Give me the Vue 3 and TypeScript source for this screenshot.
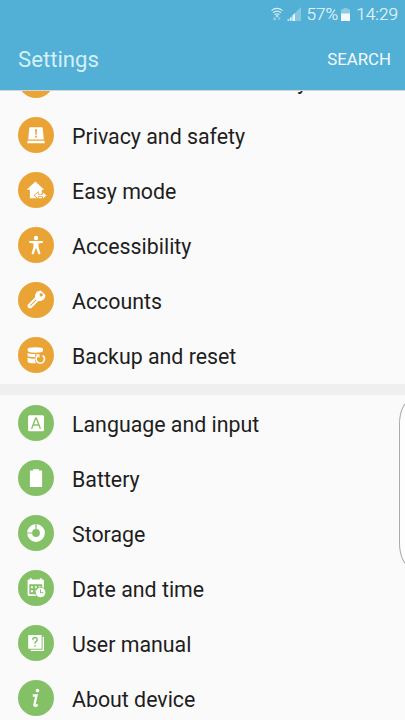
<script setup lang="ts">
type IconName =
  | 'lock' | 'privacy' | 'easy' | 'accessibility' | 'accounts' | 'backup'
  | 'language' | 'battery' | 'storage' | 'date' | 'manual' | 'about'

interface Item {
  icon: IconName
  label: string
}

interface Section {
  tone: 'orange' | 'green'
  items: Item[]
}

const sections: Section[] = [
  {
    tone: 'orange',
    items: [
      { icon: 'lock', label: 'Lock screen and security' },
      { icon: 'privacy', label: 'Privacy and safety' },
      { icon: 'easy', label: 'Easy mode' },
      { icon: 'accessibility', label: 'Accessibility' },
      { icon: 'accounts', label: 'Accounts' },
      { icon: 'backup', label: 'Backup and reset' },
    ],
  },
  {
    tone: 'green',
    items: [
      { icon: 'language', label: 'Language and input' },
      { icon: 'battery', label: 'Battery' },
      { icon: 'storage', label: 'Storage' },
      { icon: 'date', label: 'Date and time' },
      { icon: 'manual', label: 'User manual' },
      { icon: 'about', label: 'About device' },
    ],
  },
]
</script>

<template>
  <div class="screen">
    <header class="header">
      <div class="status">
        <svg class="wifi" viewBox="0 0 14 14" fill="none" stroke="#d9eff7" stroke-width="1.2">
          <path d="M1.500 3.600Q7-.8 12.500 3.600M3 5.700Q7 2.600 11 5.700M4.600 7.700Q7 5.800 9.400 7.700" />
          <path d="M7 7.700l1.500 1.200L7 10.200 5.500 8.900z" fill="#d9eff7" stroke="none" />
          <path d="M3.200 13.300v-2l1.500-1.500 1.500 1.500v2zM7.800 10.200h2.600v1.600l-1.300 1.500-1.300-1.500z" fill="#8bcae1" stroke="none" />
        </svg>
        <svg class="signal" viewBox="0 0 14 14">
          <path d="M0 14L14 0v14z" fill="#86c6df" />
          <path d="M.5 13.500v-1.300H2v1.300zM3 13.500v-3h1.500v3zM5.500 14V8.500L8 6v8z" fill="#e4f4fa" />
        </svg>
        <span class="percent">57%</span>
        <svg class="level" viewBox="0 0 9 13">
          <path d="M2.500 0h4v1.200H9V13H0V1.200h2.500z" fill="#8ccbe2" />
          <path d="M0 5.500h9V13H0z" fill="#f3fafd" />
        </svg>
        <span class="clock">14:29</span>
      </div>
      <div class="bar">
        <h1 class="title">Settings</h1>
        <button class="search" type="button">SEARCH</button>
      </div>
    </header>

    <main class="content">
      <div class="list">
        <section v-for="section in sections" :key="section.tone" class="section" :class="section.tone">
          <div v-for="item in section.items" :key="item.icon" class="row">
            <svg class="icon" viewBox="0 0 36 36">
              <circle class="disc" cx="18" cy="18" r="18" />
              <g v-if="item.icon === 'privacy'" fill="#fff">
                <path d="M12.200 10.200h11.600q.8 0 .9.800l1.100 11.500H10.200L11.300 11q.1-.8.900-.8zM9.400 23.800h17.200v2.400H9.400z" />
                <path class="ink" d="M17.100 12.300h1.900l-.3 5.500h-1.300zM17.200 18.800h1.700v1.600h-1.700z" />
              </g>
              <g v-else-if="item.icon === 'easy'">
                <path d="M17.400 9.500l8.800 8.300h-2.400v8.400H11.900v-8.400H8.600z" fill="#fff" />
                <path class="halo" d="M16.500 23.500l3.600-3v2.200h4.800v-2.200l3.600 3-3.600 3v-2.200h-4.800v2.200z" />
                <path d="M16.500 23.500l3.600-3v2.200h4.800v-2.200l3.600 3-3.600 3v-2.200h-4.800v2.200z" fill="#fff" />
              </g>
              <g v-else-if="item.icon === 'accessibility'" fill="#fff">
                <circle cx="18" cy="11" r="2.200" />
                <path d="M11.100 13.900h13.800v1.800l-4.400.7v3.300l2 7.100-2 .7-2.100-5.900h-.8l-2.100 5.900-2-.7 2-7.100v-3.300l-4.400-.7z" />
              </g>
              <g v-else-if="item.icon === 'accounts'" transform="rotate(45 21.500 14.500)">
                <path d="M19.100 9.300h4.800q1 0 1.500.8l1.100 2.400q.4 1 0 2l-1.100 2.300q-.4.800-1.400 1.200v10.700l-1.700 1.700h-1.600l-1.700-1.700V18q-1-.4-1.400-1.200l-1.100-2.300q-.4-1 0-2l1.100-2.400q.5-.8 1.500-.8z" fill="#fff" />
                <circle class="ink" cx="21.500" cy="12.100" r="1.600" />
                <path class="line" d="M21.500 19.200v8.400" stroke-width="1" />
              </g>
              <g v-else-if="item.icon === 'backup'">
                <path d="M9.600 12.200q0-1.900 8-1.900t7.400 1.900v1.600q0 1.900-7.400 1.900t-8-1.900zM9.600 15.900q2 1 7.700 1.100v3.200q-7.700 0-7.700-1.700zM9.600 20.500q2 1.300 8 1.300v4.500q-8 0-8-1.900z" fill="#fff" />
                <circle class="ink" cx="22.300" cy="22" r="5.400" />
                <path d="M20 18.500a4.200 4.200 0 1 0 4.600 0" fill="none" stroke="#fff" stroke-width="1.600" />
                <path d="M17.700 17.300h3.800v3.800z" fill="#fff" />
              </g>
              <g v-else-if="item.icon === 'language'">
                <rect x="10" y="10.200" width="16" height="16" rx="1.500" fill="#fff" />
                <path class="line" d="M13.600 23.700l4-10.500h.8l4 10.500M15 20h6" stroke-width="1.400" />
              </g>
              <path v-else-if="item.icon === 'battery'" d="M15.100 9.300h5.800v1.200h2.700q.5 0 .5.500v15.500q0 .5-.5.500H12.400q-.5 0-.5-.5V11q0-.5.5-.5h2.700z" fill="#fff" />
              <g v-else-if="item.icon === 'storage'">
                <circle cx="18" cy="18" r="6.400" fill="none" stroke="#fff" stroke-width="5" />
                <path class="line" d="M18 8.800v5.600M8.800 18h5.600" stroke-width="1.200" />
              </g>
              <g v-else-if="item.icon === 'date'">
                <path d="M10.700 9.600h1.100V8.200h2v1.400h8V8.200h2v1.400h1.100q1 0 1 1v14q0 1.400-1.400 1.400H11Q9.600 26 9.600 24.600V10.600q0-1 1.100-1z" fill="#fff" />
                <path class="ink" d="M11.300 14.300h12.900v9.900H12.300q-1 0-1-1z" />
                <path d="M12.900 16.200h2v2h-2zM16.800 16.200h2v2h-2zM20.700 16.200h2v2h-2zM12.900 20.200h2v2h-2zM16.800 20.200h2v2h-2z" fill="#fff" />
                <circle class="ink" cx="22.600" cy="22.500" r="5.500" />
                <circle cx="22.600" cy="22.500" r="4.800" fill="#fff" />
                <path class="line" d="M22.500 19.500v3.300h2.800" stroke-width="1.100" />
              </g>
              <g v-else-if="item.icon === 'manual'">
                <path d="M10.200 10.100h13.400v13.700H10.200zM24.600 11.700H26v14.400H12.700v-1.300h11.900z" fill="#fff" />
                <path class="line" d="M14.700 14.700q.2-2.200 2.300-2.200t2.300 2q0 1.200-1.300 2.100-1 .7-1 2.100M17 19.900v1.500" stroke-width="1.400" />
              </g>
              <g v-else-if="item.icon === 'about'">
                <circle cx="19.500" cy="10.600" r="1.800" fill="#fff" />
                <path d="M14.800 15.500h3.700l-2 8.800q-.4 1.900 1.100 1.600 1-.2 1.900-1.400" fill="none" stroke="#fff" stroke-width="2.300" />
              </g>
            </svg>
            <span class="label">{{ item.label }}</span>
          </div>
        </section>
      </div>
      <div class="edge-handle"></div>
    </main>
  </div>
</template>

<style>
body {
  margin: 0;
  background: #fafafa;
}
</style>

<style scoped>
.screen {
  display: flex;
  flex-direction: column;
  height: 720px;
  overflow: hidden;
  background: #fafafa;
  font-family: Roboto, "Liberation Sans", sans-serif;
}

.header {
  flex: none;
  box-sizing: border-box;
  height: 91px;
  border-bottom: 1px solid #d3d6df;
  background: #52afd5;
}

.status {
  display: flex;
  align-items: center;
  justify-content: flex-end;
  height: 28px;
  padding-right: 7px;
  color: #e2f3f9;
  font-size: 17.2px;
  line-height: 28px;
}

.percent,
.clock {
  font-weight: 300;
  -webkit-text-stroke: 0.2px #e2f3f9;
}

.wifi {
  width: 14px;
  height: 14px;
  margin-right: 3px;
}

.signal {
  width: 14px;
  height: 14px;
  margin-right: 5px;
}

.level {
  width: 9px;
  height: 13px;
  margin: 0 6px 0 3px;
}

.bar {
  display: flex;
  align-items: center;
  justify-content: space-between;
  height: 62px;
  padding: 0 14px 0 18px;
}

.title {
  margin: 0;
  color: #d5f0f9;
  font-size: 22.2px;
  font-weight: 400;
}

.search {
  padding: 0;
  border: 0;
  background: none;
  color: #f5fbfe;
  font: inherit;
  font-size: 16.8px;
}

.content {
  position: relative;
  flex: 1;
  min-height: 0;
  overflow: hidden;
}

.list {
  margin-top: -38.5px;
}

.section + .section {
  border-top: 11px solid #efefef;
}

.row {
  display: flex;
  align-items: center;
  gap: 18px;
  height: 55px;
  padding-left: 18px;
}

.orange {
  --tone: #eaa436;
  padding-bottom: 1.5px;
}

.green {
  --tone: #84c065;
  padding-top: 0.5px;
}

.icon {
  flex: none;
  width: 36px;
  height: 36px;
}

.disc,
.ink {
  fill: var(--tone);
}

.halo {
  fill: var(--tone);
  stroke: var(--tone);
  stroke-width: 1.3;
}

.line {
  fill: none;
  stroke: var(--tone);
}

.label {
  padding-top: 3px;
  color: #1e1e1e;
  font-size: 21.35px;
  line-height: 30px;
  white-space: nowrap;
}

.edge-handle {
  position: absolute;
  top: 309px;
  right: -24px;
  box-sizing: border-box;
  width: 30px;
  height: 167px;
  border: 1px solid #a9a9a9;
  border-radius: 12px / 24px;
  background: #fdfdfd;
}
</style>
